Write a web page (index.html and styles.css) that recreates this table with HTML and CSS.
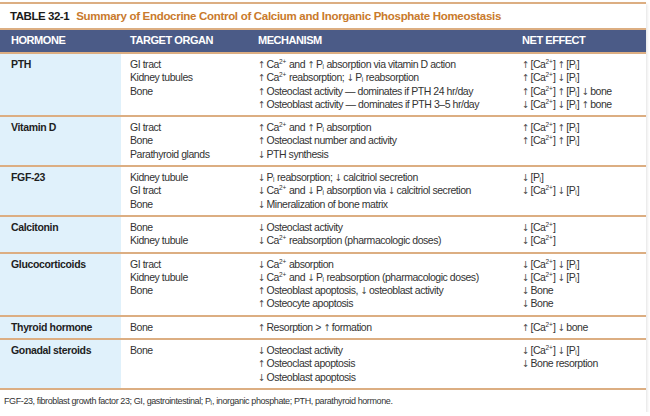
FILE: index.html
```html
<!DOCTYPE html>
<html>
<head>
<meta charset="utf-8">
<link rel="stylesheet" href="styles.css">
</head>
<body>
<div class="box">
  <h1 class="title"><span class="num">TABLE 32-1</span><span class="cap">Summary of Endocrine Control of Calcium and Inorganic Phosphate Homeostasis</span></h1>
  <table class="tbl">
    <colgroup><col class="c1"><col class="c2"><col class="c3"><col class="c4"></colgroup>
    <thead>
      <tr><th>HORMONE</th><th>TARGET ORGAN</th><th>MECHANISM</th><th>NET EFFECT</th></tr>
    </thead>
    <tbody>
      <tr>
        <td class="h">PTH</td>
        <td>GI tract<br>Kidney tubules<br>Bone</td>
        <td><i class="ar">↑</i> Ca<sup>2+</sup> and <i class="ar">↑</i> P<sub>i</sub> absorption via vitamin D action<br><i class="ar">↑</i> Ca<sup>2+</sup> reabsorption; <i class="ar">↓</i> P<sub>i</sub> reabsorption<br><i class="ar">↑</i> Osteoclast activity — dominates if PTH 24 hr/day<br><i class="ar">↑</i> Osteoblast activity — dominates if PTH 3–5 hr/day</td>
        <td><i class="ar">↑</i> [Ca<sup>2+</sup>] <i class="ar">↑</i> [P<sub>i</sub>]<br><i class="ar">↑</i> [Ca<sup>2+</sup>] <i class="ar">↓</i> [P<sub>i</sub>]<br><i class="ar">↑</i> [Ca<sup>2+</sup>] <i class="ar">↑</i> [P<sub>i</sub>] <i class="ar">↓</i> bone<br><i class="ar">↓</i> [Ca<sup>2+</sup>] <i class="ar">↓</i> [P<sub>i</sub>] <i class="ar">↑</i> bone</td>
      </tr>
      <tr>
        <td class="h">Vitamin D</td>
        <td>GI tract<br>Bone<br>Parathyroid glands</td>
        <td><i class="ar">↑</i> Ca<sup>2+</sup> and <i class="ar">↑</i> P<sub>i</sub> absorption<br><i class="ar">↑</i> Osteoclast number and activity<br><i class="ar">↓</i> PTH synthesis</td>
        <td><i class="ar">↑</i> [Ca<sup>2+</sup>] <i class="ar">↑</i> [P<sub>i</sub>]<br><i class="ar">↑</i> [Ca<sup>2+</sup>] <i class="ar">↑</i> [P<sub>i</sub>]</td>
      </tr>
      <tr>
        <td class="h">FGF-23</td>
        <td>Kidney tubule<br>GI tract<br>Bone</td>
        <td><i class="ar">↓</i> P<sub>i</sub> reabsorption; <i class="ar">↓</i> calcitriol secretion<br><i class="ar">↓</i> Ca<sup>2+</sup> and <i class="ar">↓</i> P<sub>i</sub> absorption via <i class="ar">↓</i> calcitriol secretion<br><i class="ar">↓</i> Mineralization of bone matrix</td>
        <td><i class="ar">↓</i> [P<sub>i</sub>]<br><i class="ar">↓</i> [Ca<sup>2+</sup>] <i class="ar">↓</i> [P<sub>i</sub>]</td>
      </tr>
      <tr>
        <td class="h">Calcitonin</td>
        <td>Bone<br>Kidney tubule</td>
        <td><i class="ar">↓</i> Osteoclast activity<br><i class="ar">↓</i> Ca<sup>2+</sup> reabsorption (pharmacologic doses)</td>
        <td><i class="ar">↓</i> [Ca<sup>2+</sup>]<br><i class="ar">↓</i> [Ca<sup>2+</sup>]</td>
      </tr>
      <tr>
        <td class="h">Glucocorticoids</td>
        <td>GI tract<br>Kidney tubule<br>Bone</td>
        <td><i class="ar">↓</i> Ca<sup>2+</sup> absorption<br><i class="ar">↓</i> Ca<sup>2+</sup> and <i class="ar">↓</i> P<sub>i</sub> reabsorption (pharmacologic doses)<br><i class="ar">↑</i> Osteoblast apoptosis, <i class="ar">↓</i> osteoblast activity<br><i class="ar">↑</i> Osteocyte apoptosis</td>
        <td><i class="ar">↓</i> [Ca<sup>2+</sup>] <i class="ar">↓</i> [P<sub>i</sub>]<br><i class="ar">↓</i> [Ca<sup>2+</sup>] <i class="ar">↓</i> [P<sub>i</sub>]<br><i class="ar">↓</i> Bone<br><i class="ar">↓</i> Bone</td>
      </tr>
      <tr>
        <td class="h">Thyroid hormone</td>
        <td>Bone</td>
        <td><i class="ar">↑</i> Resorption &gt; <i class="ar">↑</i> formation</td>
        <td><i class="ar">↑</i> [Ca<sup>2+</sup>] <i class="ar">↓</i> bone</td>
      </tr>
      <tr>
        <td class="h">Gonadal steroids</td>
        <td>Bone</td>
        <td><i class="ar">↓</i> Osteoclast activity<br><i class="ar">↑</i> Osteoclast apoptosis<br><i class="ar">↓</i> Osteoblast apoptosis</td>
        <td><i class="ar">↓</i> [Ca<sup>2+</sup>] <i class="ar">↓</i> [P<sub>i</sub>]<br><i class="ar">↓</i> Bone resorption</td>
      </tr>
    </tbody>
  </table>
  <p class="foot">FGF-23, fibroblast growth factor 23; GI, gastrointestinal; P<sub>i</sub>, inorganic phosphate; PTH, parathyroid hormone.</p>
</div>
</body>
</html>
```
FILE: styles.css
```css
html, body {
  margin: 0;
  padding: 0;
  background: #ffffff;
}
body {
  font-family: "Liberation Sans", Arial, sans-serif;
  color: #2a2a2a;
}
.box {
  width: 646px;
  margin-top: 2px;
  border-top: 2px solid #dcae82;
  background: #fff;
  box-shadow: 1px 2px 3px rgba(0,0,0,0.12);
}
.title {
  margin: 0;
  padding: 5px 8px 4px 10px;
  height: 15px;
  font-size: 11.5px;
  line-height: 15px;
  font-weight: bold;
  white-space: nowrap;
}
.title .num { color: #1a1a1a; margin-right: 7px; letter-spacing: -0.45px; }
.title .cap { color: #c97a2c; letter-spacing: -0.3px; }
.tbl {
  width: 100%;
  border-collapse: collapse;
  table-layout: fixed;
  font-size: 10.5px;
  line-height: 13.3px;
  letter-spacing: -0.45px;
}
.c1 { width: 121px; }
.c2 { width: 128px; }
.c3 { width: 264px; }
.tbl th {
  background: #4b5b87;
  color: #fff;
  text-align: left;
  font-weight: bold;
  font-size: 11px;
  letter-spacing: -0.45px;
  height: 22px;
  padding: 0 0 0 9px;
  border-top: 2px solid #dcae82;
  border-bottom: 2px solid #dcae82;
}
.tbl th:first-child { padding-left: 11px; }
.tbl td {
  vertical-align: top;
  padding: 4px 0 4px 9px;
  border-bottom: 2px solid #dcae82;
  color: #333;
  white-space: nowrap;
}
.tbl td.h {
  background: #e0f1fb;
  font-weight: bold;
  color: #1e1e1e;
  padding-left: 11px;
  letter-spacing: -0.35px;
}
.ar {
  font-style: normal;
  font-family: "DejaVu Sans Condensed", "DejaVu Sans", sans-serif;
  font-size: 9.5px;
  letter-spacing: 0;
  display: inline-block;
  width: 6px;
  text-align: center;
  color: #444;
}
sup, sub {
  font-size: 6.5px;
  line-height: 0;
  letter-spacing: 0;
}
sup { vertical-align: 4px; }
sub { vertical-align: -1px; }
.foot {
  margin: 0;
  padding: 5px 8px 5px 4px;
  font-size: 9px;
  line-height: 12px;
  letter-spacing: -0.4px;
  color: #333;
}
```
